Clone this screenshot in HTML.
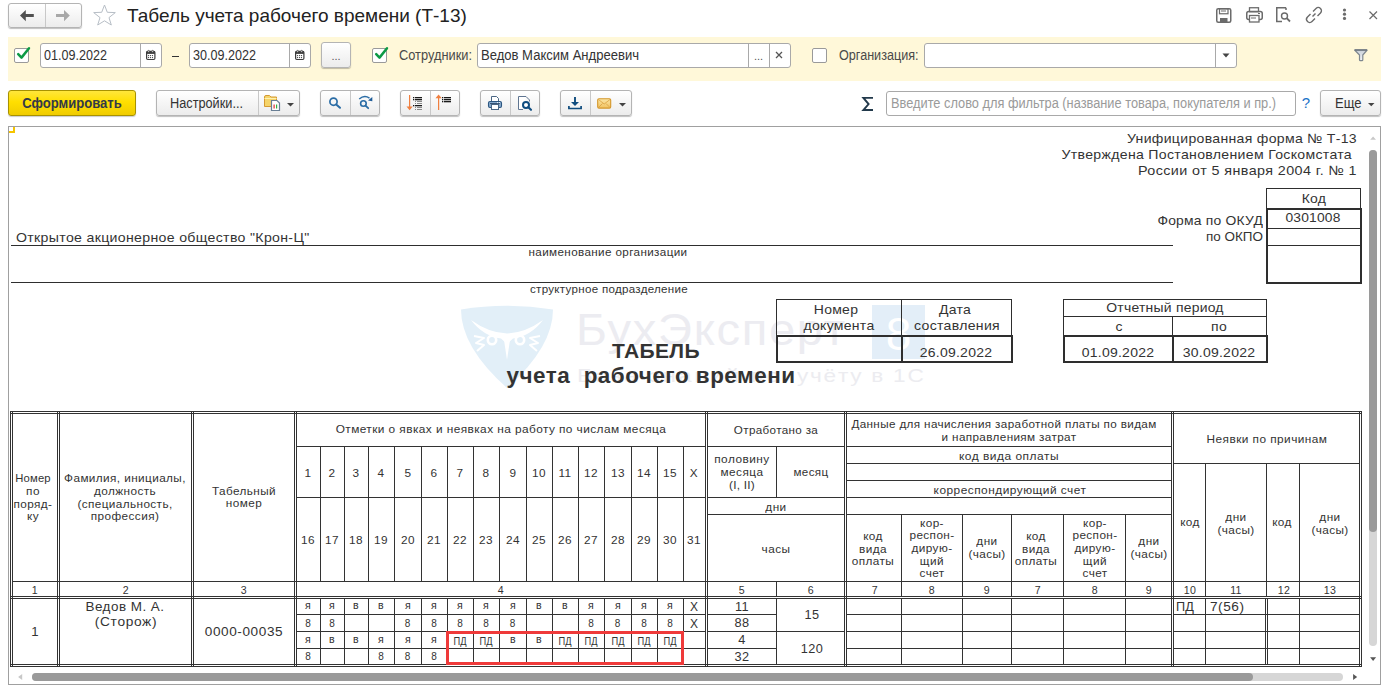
<!DOCTYPE html>
<html><head><meta charset="utf-8">
<style>
html,body{margin:0;padding:0;background:#fff;width:1387px;height:692px;overflow:hidden;position:relative;font-family:"Liberation Sans",sans-serif;}
body>div{position:absolute;}
svg{position:absolute;overflow:visible;}
</style></head><body>
<div style="left:8px;top:3px;width:72px;height:23px;border:1px solid #b4b4b4;border-radius:3px;background:linear-gradient(#fff,#ececec);box-shadow:0 1px 1px rgba(0,0,0,0.25);"></div>
<div style="left:45px;top:4px;width:1px;height:23px;background:#c8c8c8;"></div>
<svg style="left:20px;top:10px" width="14" height="12" viewBox="0 0 14 12"><path d="M0 5.6 L5.8 -0.1 V4.1 H13.8 V7.1 H5.8 V11.2 Z" fill="#505050"/></svg>
<svg style="left:56px;top:10px" width="14" height="12" viewBox="0 0 14 12"><path d="M13.8 5.6 L8 -0.1 V4.1 H0 V7.1 H8 V11.2 Z" fill="#a8a8a8"/></svg>
<svg style="left:93px;top:4px" width="24" height="22" viewBox="0 0 24 22"><path d="M11.5 1 L14.3 8.3 L22.3 8.6 L16 13.6 L18.3 21 L11.5 16.8 L4.7 21 L7 13.6 L0.7 8.6 L8.7 8.3 Z" fill="none" stroke="#b7bec6" stroke-width="1"/></svg>
<div style="top:6.42px;font-size:19px;line-height:19px;color:#222;white-space:pre;left:127px;">Табель учета рабочего времени (Т-13)</div>
<svg style="left:1216px;top:8px" width="16" height="15" viewBox="0 0 16 15"><rect x="0.75" y="0.75" width="14" height="13.5" rx="1.5" fill="none" stroke="#6b6b6b" stroke-width="1.5"/><rect x="3.5" y="0.75" width="8.5" height="5" fill="none" stroke="#6b6b6b" stroke-width="1.2"/><line x1="5" y1="3" x2="10" y2="3" stroke="#6b6b6b"/><rect x="4" y="10" width="7.5" height="4.5" fill="#6b6b6b"/></svg>
<svg style="left:1246px;top:7px" width="17" height="16" viewBox="0 0 17 16"><rect x="3.5" y="0.75" width="9" height="4" fill="none" stroke="#6b6b6b" stroke-width="1.3"/><rect x="0.75" y="4.5" width="15.5" height="8" rx="2" fill="none" stroke="#6b6b6b" stroke-width="1.5"/><rect x="3.5" y="8.5" width="9.5" height="6.5" fill="#fff" stroke="#6b6b6b" stroke-width="1.3"/><line x1="5" y1="11" x2="10" y2="11" stroke="#6b6b6b"/><line x1="12" y1="6.5" x2="14" y2="6.5" stroke="#6b6b6b"/></svg>
<svg style="left:1276px;top:7px" width="16" height="16" viewBox="0 0 16 16"><path d="M10 0.75 H0.75 V14.5 H6" fill="none" stroke="#6b6b6b" stroke-width="1.5"/><path d="M10 0.75 V3" fill="none" stroke="#6b6b6b" stroke-width="1.5"/><circle cx="8.5" cy="9" r="3" fill="none" stroke="#6b6b6b" stroke-width="1.4"/><line x1="10.7" y1="11.2" x2="14" y2="14.5" stroke="#6b6b6b" stroke-width="1.8"/></svg>
<svg style="left:1306px;top:7px" width="16" height="16" viewBox="0 0 16 16"><path d="M6.5 9.5 L9.5 6.5" stroke="#6b6b6b" stroke-width="1.4"/><path d="M7 4.5 L10 1.5 A2.8 2.8 0 0 1 14.5 6 L11.5 9" fill="none" stroke="#6b6b6b" stroke-width="1.4"/><path d="M9 11.5 L6 14.5 A2.8 2.8 0 0 1 1.5 10 L4.5 7" fill="none" stroke="#6b6b6b" stroke-width="1.4"/></svg>
<svg style="left:1342px;top:8px" width="5" height="13" viewBox="0 0 5 13"><circle cx="2.5" cy="2" r="1.6" fill="#6b6b6b"/><circle cx="2.5" cy="6.2" r="1.6" fill="#6b6b6b"/><circle cx="2.5" cy="10.4" r="1.6" fill="#6b6b6b"/></svg>
<svg style="left:1369px;top:11px" width="9" height="9" viewBox="0 0 9 9"><path d="M0.5 0.5 L8 8 M8 0.5 L0.5 8" stroke="#6b6b6b" stroke-width="1.2"/></svg>
<div style="left:8px;top:37px;width:1373px;height:44px;background:#fff8d9;"></div>
<div style="left:14px;top:48px;width:13px;height:13px;border:1px solid #9a9a9a;border-radius:2px;background:#fff"></div>
<svg style="left:14px;top:45px" width="18" height="18" viewBox="0 0 18 18"><path d="M4.2 9.2 L7.5 12.6 L15 3.2" fill="none" stroke="#0c9a45" stroke-width="2.5" stroke-linecap="round" stroke-linejoin="round"/></svg>
<div style="left:40px;top:43px;width:120px;height:23px;border:1px solid #a9a9a9;border-radius:3px;background:#fff;"></div>
<div style="left:140px;top:44px;width:1px;height:23px;background:#a9a9a9;"></div>
<div style="top:48.15px;font-size:14px;line-height:14px;color:#333;white-space:pre;left:44px;transform:scaleX(0.899);transform-origin:left 0;">01.09.2022</div>
<svg style="left:146px;top:50px" width="10" height="10" viewBox="0 0 10 10"><rect x="0.6" y="1.3" width="8.3" height="8.2" rx="1.2" fill="#fff" stroke="#3d3d3d" stroke-width="1.2"/><rect x="0.6" y="1.3" width="8.3" height="2.6" fill="#3d3d3d"/><circle cx="2.6" cy="1.3" r="0.9" fill="#fff" stroke="#3d3d3d" stroke-width="0.7"/><circle cx="6.6" cy="1.3" r="0.9" fill="#fff" stroke="#3d3d3d" stroke-width="0.7"/><g fill="#3d3d3d"><circle cx="2.5" cy="5.6" r="0.65"/><circle cx="4.5" cy="5.6" r="0.65"/><circle cx="6.5" cy="5.6" r="0.65"/><circle cx="2.5" cy="7.6" r="0.65"/><circle cx="4.5" cy="7.6" r="0.65"/><circle cx="6.5" cy="7.6" r="0.65"/></g></svg>
<div style="left:172px;top:56px;width:7px;height:1px;background:#333;"></div>
<div style="left:189px;top:43px;width:120px;height:23px;border:1px solid #a9a9a9;border-radius:3px;background:#fff;"></div>
<div style="left:289px;top:44px;width:1px;height:23px;background:#a9a9a9;"></div>
<div style="top:48.15px;font-size:14px;line-height:14px;color:#333;white-space:pre;left:193px;transform:scaleX(0.899);transform-origin:left 0;">30.09.2022</div>
<svg style="left:295px;top:50px" width="10" height="10" viewBox="0 0 10 10"><rect x="0.6" y="1.3" width="8.3" height="8.2" rx="1.2" fill="#fff" stroke="#3d3d3d" stroke-width="1.2"/><rect x="0.6" y="1.3" width="8.3" height="2.6" fill="#3d3d3d"/><circle cx="2.6" cy="1.3" r="0.9" fill="#fff" stroke="#3d3d3d" stroke-width="0.7"/><circle cx="6.6" cy="1.3" r="0.9" fill="#fff" stroke="#3d3d3d" stroke-width="0.7"/><g fill="#3d3d3d"><circle cx="2.5" cy="5.6" r="0.65"/><circle cx="4.5" cy="5.6" r="0.65"/><circle cx="6.5" cy="5.6" r="0.65"/><circle cx="2.5" cy="7.6" r="0.65"/><circle cx="4.5" cy="7.6" r="0.65"/><circle cx="6.5" cy="7.6" r="0.65"/></g></svg>
<div style="left:321px;top:42px;width:28px;height:24px;border:1px solid #b4b4b4;border-radius:3px;background:linear-gradient(#fff,#ececec);box-shadow:0 1px 1px rgba(0,0,0,0.25);"></div>
<div style="top:50.69px;font-size:11px;line-height:11px;color:#555;white-space:pre;left:-64.00px;width:800px;text-align:center;">...</div>
<div style="left:372px;top:48px;width:13px;height:13px;border:1px solid #9a9a9a;border-radius:2px;background:#fff"></div>
<svg style="left:372px;top:45px" width="18" height="18" viewBox="0 0 18 18"><path d="M4.2 9.2 L7.5 12.6 L15 3.2" fill="none" stroke="#0c9a45" stroke-width="2.5" stroke-linecap="round" stroke-linejoin="round"/></svg>
<div style="top:48.15px;font-size:14px;line-height:14px;color:#4a4a4a;white-space:pre;left:399px;transform:scaleX(0.9155);transform-origin:left 0;">Сотрудники:</div>
<div style="left:477px;top:43px;width:312px;height:23px;border:1px solid #a9a9a9;border-radius:3px;background:#fff;"></div>
<div style="left:748px;top:44px;width:1px;height:23px;background:#a9a9a9;"></div>
<div style="left:769px;top:44px;width:1px;height:23px;background:#a9a9a9;"></div>
<div style="top:48.15px;font-size:14px;line-height:14px;color:#333;white-space:pre;left:481px;transform:scaleX(0.9322);transform-origin:left 0;">Ведов Максим Андреевич</div>
<div style="top:50.69px;font-size:11px;line-height:11px;color:#555;white-space:pre;left:358.50px;width:800px;text-align:center;">...</div>
<svg style="left:775px;top:51px" width="8" height="8" viewBox="0 0 8 8"><path d="M1 1 L7 7 M7 1 L1 7" stroke="#555" stroke-width="1.3"/></svg>
<div style="left:812px;top:48px;width:13px;height:13px;border:1px solid #9a9a9a;border-radius:2px;background:#fff"></div>
<div style="top:48.15px;font-size:14px;line-height:14px;color:#4a4a4a;white-space:pre;left:839px;transform:scaleX(0.9001);transform-origin:left 0;">Организация:</div>
<div style="left:924px;top:43px;width:311px;height:23px;border:1px solid #a9a9a9;border-radius:3px;background:#fff;"></div>
<div style="left:1215px;top:44px;width:1px;height:23px;background:#a9a9a9;"></div>
<svg style="left:1222px;top:53px" width="8" height="5" viewBox="0 0 8 5"><path d="M0.5 0.5 H7.5 L4 4.5 Z" fill="#444"/></svg>
<svg style="left:1353px;top:48px" width="16" height="14" viewBox="0 0 16 14"><defs><linearGradient id="fun" x1="0" y1="0" x2="0" y2="1"><stop offset="0" stop-color="#c9d0d8"/><stop offset="1" stop-color="#f2f4f7"/></linearGradient></defs><path d="M1.6 2 H14.2 L9.8 7 V11.8 Q9.8 12.7 8.9 12.7 H7.4 Q6.5 12.7 6.5 11.8 V7 Z" fill="url(#fun)" stroke="#7f8890" stroke-width="1.2" stroke-linejoin="round"/><line x1="1.8" y1="2" x2="14" y2="2" stroke="#6f7880" stroke-width="1.6"/></svg>
<div style="left:8px;top:90px;width:126px;height:24px;border:1px solid #a89200;border-radius:3px;background:linear-gradient(#ffe63c,#ffdf00 45%,#f0cc00);box-shadow:0 1px 1px rgba(0,0,0,0.2)"></div>
<div style="top:96.15px;font-size:14px;line-height:14px;color:#333a48;white-space:pre;font-weight:bold;left:-328.50px;width:800px;text-align:center;transform:scaleX(0.9329);transform-origin:center 0;">Сформировать</div>
<div style="left:156px;top:90px;width:142px;height:24px;border:1px solid #b4b4b4;border-radius:3px;background:linear-gradient(#fff,#ececec);box-shadow:0 1px 1px rgba(0,0,0,0.25);"></div>
<div style="left:258px;top:91px;width:1px;height:24px;background:#c8c8c8;"></div>
<div style="top:96.15px;font-size:14px;line-height:14px;color:#333;white-space:pre;left:170px;transform:scaleX(0.9088);transform-origin:left 0;">Настройки...</div>
<svg style="left:263px;top:94px" width="20" height="18" viewBox="0 0 20 18"><path d="M1.5 3 Q1.5 1.5 3 1.5 H6.5 L8 3 H13.5 V12.5 H1.5 Z" fill="#f5d46a" stroke="#d59a32" stroke-width="1"/><path d="M1.5 4.5 H13.5" stroke="#fff1b0" stroke-width="1"/><path d="M8.5 6.5 H14 L16.5 9 V16.5 H8.5 Z" fill="#fff" stroke="#6a7f95" stroke-width="1.2"/><rect x="10.5" y="10.5" width="1.2" height="4" fill="#e03030"/><rect x="13" y="10.5" width="1.2" height="4" fill="#30b040"/></svg>
<svg style="left:287px;top:103px" width="7" height="4" viewBox="0 0 7 4"><path d="M0 0 H7 L3.5 3.5 Z" fill="#444"/></svg>
<div style="left:320px;top:90px;width:58px;height:24px;border:1px solid #b4b4b4;border-radius:3px;background:linear-gradient(#fff,#ececec);box-shadow:0 1px 1px rgba(0,0,0,0.25);"></div>
<div style="left:350px;top:91px;width:1px;height:24px;background:#c8c8c8;"></div>
<svg style="left:327px;top:95px" width="16" height="16" viewBox="0 0 16 16"><circle cx="6.5" cy="6.7" r="3.6" fill="none" stroke="#2a6ca5" stroke-width="1.7"/><line x1="9.2" y1="9.4" x2="13" y2="12.8" stroke="#2a6ca5" stroke-width="2" stroke-linecap="round"/></svg>
<svg style="left:356px;top:94px" width="18" height="17" viewBox="0 0 18 17"><circle cx="7.4" cy="9.5" r="2.8" fill="none" stroke="#2a6ca5" stroke-width="1.6"/><line x1="9.5" y1="11.6" x2="12.2" y2="14.2" stroke="#2a6ca5" stroke-width="1.8" stroke-linecap="round"/><path d="M3.2 5 Q8.4 0.6 13.5 4.2" fill="none" stroke="#2a6ca5" stroke-width="1.5"/><path d="M12 6.6 L16.3 3 L16.3 7.2 Z" fill="#1e5c98"/></svg>
<div style="left:400px;top:90px;width:58px;height:24px;border:1px solid #b4b4b4;border-radius:3px;background:linear-gradient(#fff,#ececec);box-shadow:0 1px 1px rgba(0,0,0,0.25);"></div>
<div style="left:430px;top:91px;width:1px;height:24px;background:#c8c8c8;"></div>
<svg style="left:402px;top:92px" width="56" height="22" viewBox="0 0 56 22"><rect x="7" y="3" width="1.2" height="13" fill="#f07f3f"/><path d="M4.5 14.5 H10.7 L7.6 18.3 Z" fill="#f07f3f"/><g fill="#1a1a1a"><rect x="11" y="5" width="1.3" height="1.3"/><rect x="13" y="5" width="7" height="1.3"/><rect x="11" y="7" width="1.3" height="1.3"/><rect x="13" y="7" width="7" height="1.3"/><rect x="11" y="13" width="1.3" height="1.3"/><rect x="13" y="13" width="7" height="1.3"/></g><g fill="#8a8a8a"><rect x="13" y="9" width="1" height="1"/><rect x="15" y="9" width="5" height="1"/><rect x="13" y="11" width="1" height="1"/><rect x="15" y="11" width="5" height="1"/><rect x="13" y="15" width="1" height="1"/><rect x="15" y="15" width="5" height="1"/><rect x="13" y="17" width="1" height="1"/><rect x="15" y="17" width="5" height="1"/></g><rect x="36" y="5" width="1.2" height="13" fill="#f07f3f"/><path d="M33.5 6.3 H39.7 L36.6 2.5 Z" fill="#f07f3f"/><g fill="#1a1a1a"><rect x="40" y="5" width="1.3" height="1.3"/><rect x="42" y="5" width="7" height="1.3"/><rect x="40" y="7" width="1.3" height="1.3"/><rect x="42" y="7" width="7" height="1.3"/><rect x="40" y="9" width="1.3" height="1.3"/><rect x="42" y="9" width="7" height="1.3"/></g></svg>
<div style="left:480px;top:90px;width:58px;height:24px;border:1px solid #b4b4b4;border-radius:3px;background:linear-gradient(#fff,#ececec);box-shadow:0 1px 1px rgba(0,0,0,0.25);"></div>
<div style="left:510px;top:91px;width:1px;height:24px;background:#c8c8c8;"></div>
<svg style="left:482px;top:92px" width="56" height="22" viewBox="0 0 56 22"><path d="M9.5 4.5 H14.5 L16.5 6.5 V10 H9.5 Z" fill="#fff" stroke="#4a6684" stroke-width="1"/><rect x="6.5" y="9.5" width="13" height="6" rx="1.5" fill="#86a9cc" stroke="#2c5680" stroke-width="1.1"/><line x1="8" y1="11.5" x2="18" y2="11.5" stroke="#2c4a6a" stroke-width="0.9"/><rect x="15" y="10.2" width="1" height="0.9" fill="#fff"/><rect x="17" y="10.2" width="1" height="0.9" fill="#fff"/><rect x="9.5" y="12.5" width="7" height="5" fill="#fff" stroke="#4a6684" stroke-width="1"/><path d="M44 4.5 H36.5 V17.5 H41" fill="#fff" stroke="#5f7591" stroke-width="1"/><path d="M44 4.5 L47.5 8 V9.5" fill="none" stroke="#5f7591" stroke-width="1"/><circle cx="44" cy="12.9" r="3" fill="#fff" stroke="#0f4d80" stroke-width="2"/><line x1="46.3" y1="15.2" x2="49" y2="17.8" stroke="#0f4d80" stroke-width="2.1" stroke-linecap="round"/></svg>
<div style="left:560px;top:90px;width:70px;height:24px;border:1px solid #b4b4b4;border-radius:3px;background:linear-gradient(#fff,#ececec);box-shadow:0 1px 1px rgba(0,0,0,0.25);"></div>
<div style="left:590px;top:91px;width:1px;height:24px;background:#c8c8c8;"></div>
<svg style="left:567px;top:96px" width="16" height="14" viewBox="0 0 16 14"><line x1="8" y1="1" x2="8" y2="7.5" stroke="#0f4c7e" stroke-width="1.9"/><path d="M4 6 H12 L8 10 Z" fill="#0f4c7e"/><path d="M1.9 10 V12.5 H14.1 V10" fill="none" stroke="#0f4c7e" stroke-width="1.7"/></svg>
<svg style="left:597px;top:98px" width="15" height="11" viewBox="0 0 15 11"><defs><linearGradient id="env" x1="0" y1="0" x2="0" y2="1"><stop offset="0" stop-color="#fbe6a6"/><stop offset="1" stop-color="#f1c261"/></linearGradient></defs><rect x="0.7" y="0.7" width="13" height="9.4" rx="1.3" fill="url(#env)" stroke="#d4962a" stroke-width="1.1"/><path d="M1.5 1.5 L7.2 6 L13 1.5 M1.5 9.5 L5.5 5.5 M13 9.5 L9 5.5" fill="none" stroke="#d9a040" stroke-width="0.8"/></svg>
<svg style="left:619px;top:103px" width="7" height="4" viewBox="0 0 7 4"><path d="M0 0 H7 L3.5 3.5 Z" fill="#444"/></svg>
<svg style="left:861px;top:96px" width="14" height="16" viewBox="0 0 14 16"><path d="M12 1.9 H2.4 L7.6 8.1 L2.4 14 H12" fill="none" stroke="#22394b" stroke-width="1.9" stroke-linejoin="miter"/></svg>
<div style="left:886px;top:91px;width:408px;height:23px;border:1px solid #a9a9a9;border-radius:3px;background:#fff;"></div>
<div style="top:96.15px;font-size:14px;line-height:14px;color:#9a9a9a;white-space:pre;left:890.5px;transform:scaleX(0.914);transform-origin:left 0;">Введите слово для фильтра (название товара, покупателя и пр.)</div>
<div style="top:95.30px;font-size:15px;line-height:15px;color:#1a73c8;white-space:pre;left:906.00px;width:800px;text-align:center;">?</div>
<div style="left:1320px;top:90px;width:59px;height:24px;border:1px solid #b4b4b4;border-radius:3px;background:linear-gradient(#fff,#ececec);box-shadow:0 1px 1px rgba(0,0,0,0.25);"></div>
<div style="top:96.15px;font-size:14px;line-height:14px;color:#333;white-space:pre;left:1334.8px;transform:scaleX(0.9298);transform-origin:left 0;">Еще</div>
<svg style="left:1367.5px;top:103px" width="7" height="4" viewBox="0 0 7 4"><path d="M0 0 H6.5 L3.25 3.3 Z" fill="#444"/></svg>
<div style="left:8px;top:126px;width:1371px;height:557px;border:1px solid #a0a0a0"></div>
<div style="left:9px;top:131px;width:6px;height:2px;background:#f5c400;"></div>
<div style="left:13px;top:127px;width:2px;height:6px;background:#f5c400;"></div>
<svg style="left:459px;top:303px" width="98" height="88" viewBox="0 0 98 88"><path d="M2 6.5 Q48 -1 94 6.5 Q94 44 48 85 Q2 44 2 6.5 Z" fill="#e2eff8"/><g fill="#fff"><path d="M12 17 Q30 30 48 30.5 Q66 30 84 17 Q72 33 54 35.5 L48 41 L42 35.5 Q24 33 12 17 Z"/><path d="M45 37 L48 57 L51 37 Z"/></g><g fill="none" stroke="#fff" stroke-width="2.6"><circle cx="33" cy="37" r="4.2"/><circle cx="61" cy="37" r="4.2"/><path d="M15 33 L25 35 L17 40 L25 42 L18 48" stroke-width="2" stroke-linejoin="round"/><path d="M81 33 L71 35 L79 40 L71 42 L78 48" stroke-width="2" stroke-linejoin="round"/></g></svg>
<div style="top:308.25px;font-size:44px;line-height:44px;color:#ececf1;white-space:pre;letter-spacing:1.576px;left:576px;transform:scaleX(1.0712);transform-origin:left 0;">БухЭксперт</div>
<div style="left:872px;top:305px;width:53px;height:54px;background:#e3eef8;"></div>
<div style="top:311.06px;font-size:46px;line-height:46px;color:#ffffff;white-space:pre;left:498.50px;width:800px;text-align:center;">8</div>
<div style="top:365.92px;font-size:19px;line-height:19px;color:#ececf0;white-space:pre;letter-spacing:1.985px;left:577px;transform:scaleX(1.2592);transform-origin:left 0;">База знаний по</div>
<div style="top:365.92px;font-size:19px;line-height:19px;color:#ececf0;white-space:pre;letter-spacing:1.48px;left:797px;transform:scaleX(1.1884);transform-origin:left 0;">учёту в 1С</div>
<div style="top:131.57px;font-size:13.5px;line-height:13.5px;color:#333;white-space:pre;letter-spacing:0.299px;left:556.80px;width:800px;text-align:right;transform:scaleX(1.041);transform-origin:right 0;">Унифицированная форма № Т-13</div>
<div style="top:147.57px;font-size:13.5px;line-height:13.5px;color:#333;white-space:pre;letter-spacing:0.301px;left:551.80px;width:800px;text-align:right;transform:scaleX(1.0436);transform-origin:right 0;">Утверждена Постановлением Госкомстата</div>
<div style="top:163.57px;font-size:13.5px;line-height:13.5px;color:#333;white-space:pre;letter-spacing:0.382px;left:556.88px;width:800px;text-align:right;transform:scaleX(1.0625);transform-origin:right 0;">России от 5 января 2004 г. № 1</div>
<div style="left:1266px;top:188px;width:1px;height:21px;background:#2e2e2e;"></div>
<div style="left:1360px;top:188px;width:1px;height:21px;background:#2e2e2e;"></div>
<div style="left:1266px;top:188px;width:95px;height:1px;background:#2e2e2e;"></div>
<div style="left:1266px;top:208px;width:96px;height:2px;background:#2e2e2e;"></div>
<div style="left:1266px;top:208px;width:2px;height:76px;background:#2e2e2e;"></div>
<div style="left:1360px;top:208px;width:2px;height:76px;background:#2e2e2e;"></div>
<div style="left:1266px;top:282px;width:96px;height:2px;background:#2e2e2e;"></div>
<div style="left:1268px;top:228px;width:92px;height:1px;background:#2e2e2e;"></div>
<div style="left:1268px;top:245px;width:92px;height:1px;background:#2e2e2e;"></div>
<div style="top:191.57px;font-size:13.5px;line-height:13.5px;color:#333;white-space:pre;letter-spacing:0.259px;left:913.63px;width:800px;text-align:center;transform:scaleX(1.035);transform-origin:center 0;">Код</div>
<div style="top:211.07px;font-size:13.5px;line-height:13.5px;color:#333;white-space:pre;letter-spacing:0.17px;left:913.09px;width:800px;text-align:center;transform:scaleX(1.0232);transform-origin:center 0;">0301008</div>
<div style="top:213.57px;font-size:13.5px;line-height:13.5px;color:#333;white-space:pre;letter-spacing:0.208px;left:462.71px;width:800px;text-align:right;transform:scaleX(1.0278);transform-origin:right 0;">Форма по ОКУД</div>
<div style="top:230.37px;font-size:13.5px;line-height:13.5px;color:#333;white-space:pre;left:462.50px;width:800px;text-align:right;transform:scaleX(0.9975);transform-origin:right 0;">по ОКПО</div>
<div style="top:231.07px;font-size:13.5px;line-height:13.5px;color:#333;white-space:pre;letter-spacing:0.311px;left:15.5px;transform:scaleX(1.0459);transform-origin:left 0;">Открытое акционерное общество &quot;Крон-Ц&quot;</div>
<div style="left:11px;top:245px;width:1162px;height:1px;background:#2e2e2e;"></div>
<div style="top:246.99px;font-size:11px;line-height:11px;color:#333;white-space:pre;letter-spacing:0.342px;left:208.17px;width:800px;text-align:center;transform:scaleX(1.0617);transform-origin:center 0;">наименование организации</div>
<div style="left:11px;top:282px;width:1162px;height:1px;background:#2e2e2e;"></div>
<div style="top:283.79px;font-size:11px;line-height:11px;color:#333;white-space:pre;letter-spacing:0.281px;left:208.64px;width:800px;text-align:center;transform:scaleX(1.0517);transform-origin:center 0;">структурное подразделение</div>
<div style="left:776px;top:299px;width:236px;height:1px;background:#2e2e2e;"></div>
<div style="left:776px;top:299px;width:1px;height:37px;background:#2e2e2e;"></div>
<div style="left:1011px;top:299px;width:1px;height:37px;background:#2e2e2e;"></div>
<div style="left:901px;top:299px;width:1px;height:37px;background:#2e2e2e;"></div>
<div style="left:776px;top:335px;width:237px;height:2px;background:#2e2e2e;"></div>
<div style="left:776px;top:335px;width:2px;height:28px;background:#2e2e2e;"></div>
<div style="left:1011px;top:335px;width:2px;height:28px;background:#2e2e2e;"></div>
<div style="left:776px;top:361px;width:237px;height:2px;background:#2e2e2e;"></div>
<div style="left:901px;top:335px;width:2px;height:28px;background:#2e2e2e;"></div>
<div style="top:302.57px;font-size:13.5px;line-height:13.5px;color:#333;white-space:pre;letter-spacing:0.281px;left:436.14px;width:800px;text-align:center;transform:scaleX(1.035);transform-origin:center 0;">Номер</div>
<div style="top:319.17px;font-size:13.5px;line-height:13.5px;color:#333;white-space:pre;letter-spacing:0.276px;left:438.74px;width:800px;text-align:center;transform:scaleX(1.0393);transform-origin:center 0;">документа</div>
<div style="top:302.57px;font-size:13.5px;line-height:13.5px;color:#333;white-space:pre;letter-spacing:0.253px;left:555.13px;width:800px;text-align:center;transform:scaleX(1.035);transform-origin:center 0;">Дата</div>
<div style="top:319.17px;font-size:13.5px;line-height:13.5px;color:#333;white-space:pre;letter-spacing:0.294px;left:556.75px;width:800px;text-align:center;transform:scaleX(1.0425);transform-origin:center 0;">составления</div>
<div style="top:346.17px;font-size:13.5px;line-height:13.5px;color:#333;white-space:pre;letter-spacing:0.233px;left:555.92px;width:800px;text-align:center;transform:scaleX(1.0357);transform-origin:center 0;">26.09.2022</div>
<div style="left:1063px;top:299px;width:204px;height:1px;background:#2e2e2e;"></div>
<div style="left:1063px;top:299px;width:1px;height:37px;background:#2e2e2e;"></div>
<div style="left:1266px;top:299px;width:1px;height:37px;background:#2e2e2e;"></div>
<div style="left:1063px;top:316px;width:204px;height:1px;background:#2e2e2e;"></div>
<div style="left:1172px;top:316px;width:1px;height:20px;background:#2e2e2e;"></div>
<div style="left:1063px;top:335px;width:205px;height:2px;background:#2e2e2e;"></div>
<div style="left:1063px;top:335px;width:2px;height:28px;background:#2e2e2e;"></div>
<div style="left:1266px;top:335px;width:2px;height:28px;background:#2e2e2e;"></div>
<div style="left:1063px;top:361px;width:205px;height:2px;background:#2e2e2e;"></div>
<div style="left:1172px;top:335px;width:2px;height:28px;background:#2e2e2e;"></div>
<div style="top:301.27px;font-size:13.5px;line-height:13.5px;color:#333;white-space:pre;letter-spacing:0.23px;left:765.41px;width:800px;text-align:center;transform:scaleX(1.0323);transform-origin:center 0;">Отчетный период</div>
<div style="top:319.57px;font-size:13.5px;line-height:13.5px;color:#333;white-space:pre;letter-spacing:0.228px;left:718.51px;width:800px;text-align:center;transform:scaleX(1.035);transform-origin:center 0;">с</div>
<div style="top:319.57px;font-size:13.5px;line-height:13.5px;color:#333;white-space:pre;letter-spacing:0.251px;left:818.93px;width:800px;text-align:center;transform:scaleX(1.035);transform-origin:center 0;">по</div>
<div style="top:345.97px;font-size:13.5px;line-height:13.5px;color:#333;white-space:pre;letter-spacing:0.233px;left:717.92px;width:800px;text-align:center;transform:scaleX(1.0357);transform-origin:center 0;">01.09.2022</div>
<div style="top:345.97px;font-size:13.5px;line-height:13.5px;color:#333;white-space:pre;letter-spacing:0.233px;left:818.92px;width:800px;text-align:center;transform:scaleX(1.0357);transform-origin:center 0;">30.09.2022</div>
<div style="top:340.85px;font-size:20.5px;line-height:20.5px;color:#333;white-space:pre;font-weight:bold;letter-spacing:0.36px;left:256.18px;width:800px;text-align:center;transform:scaleX(1.0266);transform-origin:center 0;">ТАБЕЛЬ</div>
<div style="top:365.50px;font-size:21.5px;line-height:21.5px;color:#333;white-space:pre;font-weight:bold;letter-spacing:0.483px;left:250.84px;width:800px;text-align:center;transform:scaleX(1.0436);transform-origin:center 0;">учета  рабочего времени</div>
<div style="left:10px;top:411px;width:1px;height:256px;background:#333;"></div>
<div style="left:12px;top:411px;width:1px;height:256px;background:#333;"></div>
<div style="left:57px;top:411px;width:1px;height:256px;background:#333;"></div>
<div style="left:59px;top:411px;width:1px;height:256px;background:#333;"></div>
<div style="left:191px;top:411px;width:1px;height:256px;background:#333;"></div>
<div style="left:193px;top:411px;width:1px;height:256px;background:#333;"></div>
<div style="left:294px;top:411px;width:1px;height:256px;background:#333;"></div>
<div style="left:296px;top:411px;width:1px;height:256px;background:#333;"></div>
<div style="left:705px;top:411px;width:1px;height:256px;background:#333;"></div>
<div style="left:707px;top:411px;width:1px;height:256px;background:#333;"></div>
<div style="left:844px;top:411px;width:1px;height:256px;background:#333;"></div>
<div style="left:846px;top:411px;width:1px;height:256px;background:#333;"></div>
<div style="left:1171px;top:411px;width:1px;height:256px;background:#333;"></div>
<div style="left:1173px;top:411px;width:1px;height:256px;background:#333;"></div>
<div style="left:1359px;top:411px;width:1px;height:256px;background:#333;"></div>
<div style="left:1361px;top:411px;width:1px;height:256px;background:#333;"></div>
<div style="left:10px;top:411px;width:1352px;height:1px;background:#333;"></div>
<div style="left:10px;top:413px;width:1352px;height:1px;background:#333;"></div>
<div style="left:10px;top:596px;width:1352px;height:1px;background:#333;"></div>
<div style="left:10px;top:598px;width:1352px;height:1px;background:#333;"></div>
<div style="left:10px;top:664px;width:1352px;height:1px;background:#333;"></div>
<div style="left:10px;top:666px;width:1352px;height:1px;background:#333;"></div>
<div style="left:12px;top:581px;width:1348px;height:1px;background:#333;"></div>
<div style="left:320px;top:446px;width:1px;height:135px;background:#333;"></div>
<div style="left:320px;top:598px;width:1px;height:66px;background:#333;"></div>
<div style="left:344px;top:446px;width:1px;height:135px;background:#333;"></div>
<div style="left:344px;top:598px;width:1px;height:66px;background:#333;"></div>
<div style="left:368px;top:446px;width:1px;height:135px;background:#333;"></div>
<div style="left:368px;top:598px;width:1px;height:66px;background:#333;"></div>
<div style="left:394px;top:446px;width:1px;height:135px;background:#333;"></div>
<div style="left:394px;top:598px;width:1px;height:66px;background:#333;"></div>
<div style="left:421px;top:446px;width:1px;height:135px;background:#333;"></div>
<div style="left:421px;top:598px;width:1px;height:66px;background:#333;"></div>
<div style="left:447px;top:446px;width:1px;height:135px;background:#333;"></div>
<div style="left:447px;top:598px;width:1px;height:66px;background:#333;"></div>
<div style="left:473px;top:446px;width:1px;height:135px;background:#333;"></div>
<div style="left:473px;top:598px;width:1px;height:66px;background:#333;"></div>
<div style="left:499px;top:446px;width:1px;height:135px;background:#333;"></div>
<div style="left:499px;top:598px;width:1px;height:66px;background:#333;"></div>
<div style="left:526px;top:446px;width:1px;height:135px;background:#333;"></div>
<div style="left:526px;top:598px;width:1px;height:66px;background:#333;"></div>
<div style="left:552px;top:446px;width:1px;height:135px;background:#333;"></div>
<div style="left:552px;top:598px;width:1px;height:66px;background:#333;"></div>
<div style="left:578px;top:446px;width:1px;height:135px;background:#333;"></div>
<div style="left:578px;top:598px;width:1px;height:66px;background:#333;"></div>
<div style="left:604px;top:446px;width:1px;height:135px;background:#333;"></div>
<div style="left:604px;top:598px;width:1px;height:66px;background:#333;"></div>
<div style="left:631px;top:446px;width:1px;height:135px;background:#333;"></div>
<div style="left:631px;top:598px;width:1px;height:66px;background:#333;"></div>
<div style="left:657px;top:446px;width:1px;height:135px;background:#333;"></div>
<div style="left:657px;top:598px;width:1px;height:66px;background:#333;"></div>
<div style="left:683px;top:446px;width:1px;height:135px;background:#333;"></div>
<div style="left:683px;top:598px;width:1px;height:66px;background:#333;"></div>
<div style="left:296px;top:446px;width:409px;height:1px;background:#333;"></div>
<div style="left:296px;top:497px;width:409px;height:1px;background:#333;"></div>
<div style="left:707px;top:446px;width:137px;height:1px;background:#333;"></div>
<div style="left:707px;top:497px;width:137px;height:1px;background:#333;"></div>
<div style="left:707px;top:514px;width:137px;height:1px;background:#333;"></div>
<div style="left:776px;top:446px;width:1px;height:51px;background:#333;"></div>
<div style="left:776px;top:581px;width:1px;height:15px;background:#333;"></div>
<div style="left:776px;top:598px;width:1px;height:66px;background:#333;"></div>
<div style="left:846px;top:446px;width:325px;height:1px;background:#333;"></div>
<div style="left:846px;top:463px;width:325px;height:1px;background:#333;"></div>
<div style="left:846px;top:480px;width:325px;height:1px;background:#333;"></div>
<div style="left:846px;top:497px;width:325px;height:1px;background:#333;"></div>
<div style="left:846px;top:514px;width:325px;height:1px;background:#333;"></div>
<div style="left:901px;top:514px;width:1px;height:82px;background:#333;"></div>
<div style="left:901px;top:598px;width:1px;height:66px;background:#333;"></div>
<div style="left:962px;top:514px;width:1px;height:82px;background:#333;"></div>
<div style="left:962px;top:598px;width:1px;height:66px;background:#333;"></div>
<div style="left:1011px;top:514px;width:1px;height:82px;background:#333;"></div>
<div style="left:1011px;top:598px;width:1px;height:66px;background:#333;"></div>
<div style="left:1063px;top:514px;width:1px;height:82px;background:#333;"></div>
<div style="left:1063px;top:598px;width:1px;height:66px;background:#333;"></div>
<div style="left:1125px;top:514px;width:1px;height:82px;background:#333;"></div>
<div style="left:1125px;top:598px;width:1px;height:66px;background:#333;"></div>
<div style="left:1173px;top:463px;width:186px;height:1px;background:#333;"></div>
<div style="left:1205px;top:463px;width:1px;height:133px;background:#333;"></div>
<div style="left:1205px;top:598px;width:1px;height:66px;background:#333;"></div>
<div style="left:1299px;top:463px;width:1px;height:133px;background:#333;"></div>
<div style="left:1299px;top:598px;width:1px;height:66px;background:#333;"></div>
<div style="left:1266px;top:463px;width:1px;height:133px;background:#333;"></div>
<div style="left:1265px;top:598px;width:1px;height:66px;background:#333;"></div>
<div style="left:1267px;top:598px;width:1px;height:66px;background:#333;"></div>
<div style="left:296px;top:614px;width:409px;height:1px;background:#333;"></div>
<div style="left:707px;top:614px;width:69px;height:1px;background:#333;"></div>
<div style="left:846px;top:614px;width:325px;height:1px;background:#333;"></div>
<div style="left:1173px;top:614px;width:186px;height:1px;background:#333;"></div>
<div style="left:296px;top:648px;width:409px;height:1px;background:#333;"></div>
<div style="left:707px;top:648px;width:69px;height:1px;background:#333;"></div>
<div style="left:846px;top:648px;width:325px;height:1px;background:#333;"></div>
<div style="left:1173px;top:648px;width:186px;height:1px;background:#333;"></div>
<div style="left:296px;top:631px;width:409px;height:1px;background:#333;"></div>
<div style="left:707px;top:631px;width:137px;height:1px;background:#333;"></div>
<div style="left:846px;top:631px;width:325px;height:1px;background:#333;"></div>
<div style="left:1173px;top:631px;width:186px;height:1px;background:#333;"></div>
<div style="top:472.99px;font-size:11px;line-height:11px;color:#333;white-space:pre;letter-spacing:0.16px;left:-366.72px;width:800px;text-align:center;transform:scaleX(1.0242);transform-origin:center 0;">Номер</div>
<div style="top:485.79px;font-size:11px;line-height:11px;color:#333;white-space:pre;letter-spacing:0.395px;left:-366.60px;width:800px;text-align:center;transform:scaleX(1.07);transform-origin:center 0;">по</div>
<div style="top:498.59px;font-size:11px;line-height:11px;color:#333;white-space:pre;letter-spacing:0.372px;left:-366.61px;width:800px;text-align:center;transform:scaleX(1.07);transform-origin:center 0;">поряд-</div>
<div style="top:511.39px;font-size:11px;line-height:11px;color:#333;white-space:pre;letter-spacing:0.341px;left:-366.63px;width:800px;text-align:center;transform:scaleX(1.07);transform-origin:center 0;">ку</div>
<div style="top:472.99px;font-size:11px;line-height:11px;color:#333;white-space:pre;letter-spacing:0.381px;left:-274.81px;width:800px;text-align:center;transform:scaleX(1.0684);transform-origin:center 0;">Фамилия, инициалы,</div>
<div style="top:485.79px;font-size:11px;line-height:11px;color:#333;white-space:pre;letter-spacing:0.396px;left:-274.80px;width:800px;text-align:center;transform:scaleX(1.07);transform-origin:center 0;">должность</div>
<div style="top:498.59px;font-size:11px;line-height:11px;color:#333;white-space:pre;letter-spacing:0.364px;left:-274.82px;width:800px;text-align:center;transform:scaleX(1.07);transform-origin:center 0;">(специальность,</div>
<div style="top:511.39px;font-size:11px;line-height:11px;color:#333;white-space:pre;letter-spacing:0.393px;left:-274.80px;width:800px;text-align:center;transform:scaleX(1.07);transform-origin:center 0;">профессия)</div>
<div style="top:485.69px;font-size:11px;line-height:11px;color:#333;white-space:pre;letter-spacing:0.398px;left:-156.30px;width:800px;text-align:center;transform:scaleX(1.0677);transform-origin:center 0;">Табельный</div>
<div style="top:498.49px;font-size:11px;line-height:11px;color:#333;white-space:pre;letter-spacing:0.419px;left:-156.29px;width:800px;text-align:center;transform:scaleX(1.07);transform-origin:center 0;">номер</div>
<div style="top:424.19px;font-size:11px;line-height:11px;color:#333;white-space:pre;letter-spacing:0.397px;left:101.20px;width:800px;text-align:center;transform:scaleX(1.0778);transform-origin:center 0;">Отметки о явках и неявках на работу по числам месяца</div>
<div style="top:467.59px;font-size:11px;line-height:11px;color:#333;white-space:pre;letter-spacing:0.401px;left:-91.70px;width:800px;text-align:center;transform:scaleX(1.07);transform-origin:center 0;">1</div>
<div style="top:534.59px;font-size:11px;line-height:11px;color:#333;white-space:pre;letter-spacing:0.401px;left:-91.70px;width:800px;text-align:center;transform:scaleX(1.07);transform-origin:center 0;">16</div>
<div style="top:467.59px;font-size:11px;line-height:11px;color:#333;white-space:pre;letter-spacing:0.401px;left:-67.70px;width:800px;text-align:center;transform:scaleX(1.07);transform-origin:center 0;">2</div>
<div style="top:534.59px;font-size:11px;line-height:11px;color:#333;white-space:pre;letter-spacing:0.401px;left:-67.70px;width:800px;text-align:center;transform:scaleX(1.07);transform-origin:center 0;">17</div>
<div style="top:467.59px;font-size:11px;line-height:11px;color:#333;white-space:pre;letter-spacing:0.401px;left:-43.70px;width:800px;text-align:center;transform:scaleX(1.07);transform-origin:center 0;">3</div>
<div style="top:534.59px;font-size:11px;line-height:11px;color:#333;white-space:pre;letter-spacing:0.401px;left:-43.70px;width:800px;text-align:center;transform:scaleX(1.07);transform-origin:center 0;">18</div>
<div style="top:467.59px;font-size:11px;line-height:11px;color:#333;white-space:pre;letter-spacing:0.401px;left:-18.70px;width:800px;text-align:center;transform:scaleX(1.07);transform-origin:center 0;">4</div>
<div style="top:534.59px;font-size:11px;line-height:11px;color:#333;white-space:pre;letter-spacing:0.401px;left:-18.70px;width:800px;text-align:center;transform:scaleX(1.07);transform-origin:center 0;">19</div>
<div style="top:467.59px;font-size:11px;line-height:11px;color:#333;white-space:pre;letter-spacing:0.401px;left:7.80px;width:800px;text-align:center;transform:scaleX(1.07);transform-origin:center 0;">5</div>
<div style="top:534.59px;font-size:11px;line-height:11px;color:#333;white-space:pre;letter-spacing:0.401px;left:7.80px;width:800px;text-align:center;transform:scaleX(1.07);transform-origin:center 0;">20</div>
<div style="top:467.59px;font-size:11px;line-height:11px;color:#333;white-space:pre;letter-spacing:0.401px;left:34.30px;width:800px;text-align:center;transform:scaleX(1.07);transform-origin:center 0;">6</div>
<div style="top:534.59px;font-size:11px;line-height:11px;color:#333;white-space:pre;letter-spacing:0.401px;left:34.30px;width:800px;text-align:center;transform:scaleX(1.07);transform-origin:center 0;">21</div>
<div style="top:467.59px;font-size:11px;line-height:11px;color:#333;white-space:pre;letter-spacing:0.401px;left:60.30px;width:800px;text-align:center;transform:scaleX(1.07);transform-origin:center 0;">7</div>
<div style="top:534.59px;font-size:11px;line-height:11px;color:#333;white-space:pre;letter-spacing:0.401px;left:60.30px;width:800px;text-align:center;transform:scaleX(1.07);transform-origin:center 0;">22</div>
<div style="top:467.59px;font-size:11px;line-height:11px;color:#333;white-space:pre;letter-spacing:0.401px;left:86.30px;width:800px;text-align:center;transform:scaleX(1.07);transform-origin:center 0;">8</div>
<div style="top:534.59px;font-size:11px;line-height:11px;color:#333;white-space:pre;letter-spacing:0.401px;left:86.30px;width:800px;text-align:center;transform:scaleX(1.07);transform-origin:center 0;">23</div>
<div style="top:467.59px;font-size:11px;line-height:11px;color:#333;white-space:pre;letter-spacing:0.401px;left:112.80px;width:800px;text-align:center;transform:scaleX(1.07);transform-origin:center 0;">9</div>
<div style="top:534.59px;font-size:11px;line-height:11px;color:#333;white-space:pre;letter-spacing:0.401px;left:112.80px;width:800px;text-align:center;transform:scaleX(1.07);transform-origin:center 0;">24</div>
<div style="top:467.59px;font-size:11px;line-height:11px;color:#333;white-space:pre;letter-spacing:0.401px;left:139.30px;width:800px;text-align:center;transform:scaleX(1.07);transform-origin:center 0;">10</div>
<div style="top:534.59px;font-size:11px;line-height:11px;color:#333;white-space:pre;letter-spacing:0.401px;left:139.30px;width:800px;text-align:center;transform:scaleX(1.07);transform-origin:center 0;">25</div>
<div style="top:467.59px;font-size:11px;line-height:11px;color:#333;white-space:pre;letter-spacing:0.374px;left:165.29px;width:800px;text-align:center;transform:scaleX(1.07);transform-origin:center 0;">11</div>
<div style="top:534.59px;font-size:11px;line-height:11px;color:#333;white-space:pre;letter-spacing:0.401px;left:165.30px;width:800px;text-align:center;transform:scaleX(1.07);transform-origin:center 0;">26</div>
<div style="top:467.59px;font-size:11px;line-height:11px;color:#333;white-space:pre;letter-spacing:0.401px;left:191.30px;width:800px;text-align:center;transform:scaleX(1.07);transform-origin:center 0;">12</div>
<div style="top:534.59px;font-size:11px;line-height:11px;color:#333;white-space:pre;letter-spacing:0.401px;left:191.30px;width:800px;text-align:center;transform:scaleX(1.07);transform-origin:center 0;">27</div>
<div style="top:467.59px;font-size:11px;line-height:11px;color:#333;white-space:pre;letter-spacing:0.401px;left:217.80px;width:800px;text-align:center;transform:scaleX(1.07);transform-origin:center 0;">13</div>
<div style="top:534.59px;font-size:11px;line-height:11px;color:#333;white-space:pre;letter-spacing:0.401px;left:217.80px;width:800px;text-align:center;transform:scaleX(1.07);transform-origin:center 0;">28</div>
<div style="top:467.59px;font-size:11px;line-height:11px;color:#333;white-space:pre;letter-spacing:0.401px;left:244.30px;width:800px;text-align:center;transform:scaleX(1.07);transform-origin:center 0;">14</div>
<div style="top:534.59px;font-size:11px;line-height:11px;color:#333;white-space:pre;letter-spacing:0.401px;left:244.30px;width:800px;text-align:center;transform:scaleX(1.07);transform-origin:center 0;">29</div>
<div style="top:467.59px;font-size:11px;line-height:11px;color:#333;white-space:pre;letter-spacing:0.401px;left:270.30px;width:800px;text-align:center;transform:scaleX(1.07);transform-origin:center 0;">15</div>
<div style="top:534.59px;font-size:11px;line-height:11px;color:#333;white-space:pre;letter-spacing:0.401px;left:270.30px;width:800px;text-align:center;transform:scaleX(1.07);transform-origin:center 0;">30</div>
<div style="top:467.59px;font-size:11px;line-height:11px;color:#333;white-space:pre;letter-spacing:0.48px;left:294.34px;width:800px;text-align:center;transform:scaleX(1.07);transform-origin:center 0;">X</div>
<div style="top:534.59px;font-size:11px;line-height:11px;color:#333;white-space:pre;letter-spacing:0.401px;left:294.30px;width:800px;text-align:center;transform:scaleX(1.07);transform-origin:center 0;">31</div>
<div style="top:424.59px;font-size:11px;line-height:11px;color:#333;white-space:pre;letter-spacing:0.321px;left:376.16px;width:800px;text-align:center;transform:scaleX(1.0586);transform-origin:center 0;">Отработано за</div>
<div style="top:453.99px;font-size:11px;line-height:11px;color:#333;white-space:pre;letter-spacing:0.431px;left:341.72px;width:800px;text-align:center;transform:scaleX(1.0774);transform-origin:center 0;">половину</div>
<div style="top:466.99px;font-size:11px;line-height:11px;color:#333;white-space:pre;letter-spacing:0.41px;left:341.70px;width:800px;text-align:center;transform:scaleX(1.07);transform-origin:center 0;">месяца</div>
<div style="top:479.99px;font-size:11px;line-height:11px;color:#333;white-space:pre;letter-spacing:0.211px;left:341.61px;width:800px;text-align:center;transform:scaleX(1.07);transform-origin:center 0;">(I, II)</div>
<div style="top:466.99px;font-size:11px;line-height:11px;color:#333;white-space:pre;letter-spacing:0.337px;left:411.17px;width:800px;text-align:center;transform:scaleX(1.0567);transform-origin:center 0;">месяц</div>
<div style="top:501.69px;font-size:11px;line-height:11px;color:#333;white-space:pre;letter-spacing:0.406px;left:376.20px;width:800px;text-align:center;transform:scaleX(1.07);transform-origin:center 0;">дни</div>
<div style="top:543.69px;font-size:11px;line-height:11px;color:#333;white-space:pre;letter-spacing:0.413px;left:376.21px;width:800px;text-align:center;transform:scaleX(1.07);transform-origin:center 0;">часы</div>
<div style="top:419.29px;font-size:11px;line-height:11px;color:#333;white-space:pre;letter-spacing:0.34px;left:604.17px;width:800px;text-align:center;transform:scaleX(1.0626);transform-origin:center 0;">Данные для начисления заработной платы по видам</div>
<div style="top:431.69px;font-size:11px;line-height:11px;color:#333;white-space:pre;letter-spacing:0.344px;left:609.17px;width:800px;text-align:center;transform:scaleX(1.0644);transform-origin:center 0;">и направлениям затрат</div>
<div style="top:451.39px;font-size:11px;line-height:11px;color:#333;white-space:pre;letter-spacing:0.454px;left:609.23px;width:800px;text-align:center;transform:scaleX(1.0869);transform-origin:center 0;">код вида оплаты</div>
<div style="top:485.19px;font-size:11px;line-height:11px;color:#333;white-space:pre;letter-spacing:0.445px;left:609.72px;width:800px;text-align:center;transform:scaleX(1.0803);transform-origin:center 0;">корреспондирующий счет</div>
<div style="top:531.19px;font-size:11px;line-height:11px;color:#333;white-space:pre;letter-spacing:0.376px;left:473.19px;width:800px;text-align:center;transform:scaleX(1.07);transform-origin:center 0;">код</div>
<div style="top:543.69px;font-size:11px;line-height:11px;color:#333;white-space:pre;letter-spacing:0.401px;left:473.20px;width:800px;text-align:center;transform:scaleX(1.07);transform-origin:center 0;">вида</div>
<div style="top:556.19px;font-size:11px;line-height:11px;color:#333;white-space:pre;letter-spacing:0.407px;left:473.20px;width:800px;text-align:center;transform:scaleX(1.07);transform-origin:center 0;">оплаты</div>
<div style="top:531.19px;font-size:11px;line-height:11px;color:#333;white-space:pre;letter-spacing:0.376px;left:636.19px;width:800px;text-align:center;transform:scaleX(1.07);transform-origin:center 0;">код</div>
<div style="top:543.69px;font-size:11px;line-height:11px;color:#333;white-space:pre;letter-spacing:0.401px;left:636.20px;width:800px;text-align:center;transform:scaleX(1.07);transform-origin:center 0;">вида</div>
<div style="top:556.19px;font-size:11px;line-height:11px;color:#333;white-space:pre;letter-spacing:0.407px;left:636.20px;width:800px;text-align:center;transform:scaleX(1.07);transform-origin:center 0;">оплаты</div>
<div style="top:517.69px;font-size:11px;line-height:11px;color:#333;white-space:pre;letter-spacing:0.341px;left:532.17px;width:800px;text-align:center;transform:scaleX(1.07);transform-origin:center 0;">кор-</div>
<div style="top:530.39px;font-size:11px;line-height:11px;color:#333;white-space:pre;letter-spacing:0.37px;left:532.18px;width:800px;text-align:center;transform:scaleX(1.07);transform-origin:center 0;">респон-</div>
<div style="top:543.09px;font-size:11px;line-height:11px;color:#333;white-space:pre;letter-spacing:0.392px;left:532.20px;width:800px;text-align:center;transform:scaleX(1.07);transform-origin:center 0;">дирую-</div>
<div style="top:555.79px;font-size:11px;line-height:11px;color:#333;white-space:pre;letter-spacing:0.465px;left:532.23px;width:800px;text-align:center;transform:scaleX(1.07);transform-origin:center 0;">щий</div>
<div style="top:568.49px;font-size:11px;line-height:11px;color:#333;white-space:pre;letter-spacing:0.358px;left:532.18px;width:800px;text-align:center;transform:scaleX(1.07);transform-origin:center 0;">счет</div>
<div style="top:517.69px;font-size:11px;line-height:11px;color:#333;white-space:pre;letter-spacing:0.341px;left:694.67px;width:800px;text-align:center;transform:scaleX(1.07);transform-origin:center 0;">кор-</div>
<div style="top:530.39px;font-size:11px;line-height:11px;color:#333;white-space:pre;letter-spacing:0.37px;left:694.68px;width:800px;text-align:center;transform:scaleX(1.07);transform-origin:center 0;">респон-</div>
<div style="top:543.09px;font-size:11px;line-height:11px;color:#333;white-space:pre;letter-spacing:0.392px;left:694.70px;width:800px;text-align:center;transform:scaleX(1.07);transform-origin:center 0;">дирую-</div>
<div style="top:555.79px;font-size:11px;line-height:11px;color:#333;white-space:pre;letter-spacing:0.465px;left:694.73px;width:800px;text-align:center;transform:scaleX(1.07);transform-origin:center 0;">щий</div>
<div style="top:568.49px;font-size:11px;line-height:11px;color:#333;white-space:pre;letter-spacing:0.358px;left:694.68px;width:800px;text-align:center;transform:scaleX(1.07);transform-origin:center 0;">счет</div>
<div style="top:536.39px;font-size:11px;line-height:11px;color:#333;white-space:pre;letter-spacing:0.406px;left:587.20px;width:800px;text-align:center;transform:scaleX(1.07);transform-origin:center 0;">дни</div>
<div style="top:549.49px;font-size:11px;line-height:11px;color:#333;white-space:pre;letter-spacing:0.355px;left:587.18px;width:800px;text-align:center;transform:scaleX(1.07);transform-origin:center 0;">(часы)</div>
<div style="top:536.39px;font-size:11px;line-height:11px;color:#333;white-space:pre;letter-spacing:0.406px;left:748.70px;width:800px;text-align:center;transform:scaleX(1.07);transform-origin:center 0;">дни</div>
<div style="top:549.49px;font-size:11px;line-height:11px;color:#333;white-space:pre;letter-spacing:0.355px;left:748.68px;width:800px;text-align:center;transform:scaleX(1.07);transform-origin:center 0;">(часы)</div>
<div style="top:434.19px;font-size:11px;line-height:11px;color:#333;white-space:pre;letter-spacing:0.412px;left:866.81px;width:800px;text-align:center;transform:scaleX(1.076);transform-origin:center 0;">Неявки по причинам</div>
<div style="top:517.29px;font-size:11px;line-height:11px;color:#333;white-space:pre;letter-spacing:0.376px;left:789.69px;width:800px;text-align:center;transform:scaleX(1.07);transform-origin:center 0;">код</div>
<div style="top:517.29px;font-size:11px;line-height:11px;color:#333;white-space:pre;letter-spacing:0.376px;left:882.19px;width:800px;text-align:center;transform:scaleX(1.07);transform-origin:center 0;">код</div>
<div style="top:511.69px;font-size:11px;line-height:11px;color:#333;white-space:pre;letter-spacing:0.406px;left:836.20px;width:800px;text-align:center;transform:scaleX(1.07);transform-origin:center 0;">дни</div>
<div style="top:525.29px;font-size:11px;line-height:11px;color:#333;white-space:pre;letter-spacing:0.355px;left:836.18px;width:800px;text-align:center;transform:scaleX(1.07);transform-origin:center 0;">(часы)</div>
<div style="top:511.69px;font-size:11px;line-height:11px;color:#333;white-space:pre;letter-spacing:0.406px;left:930.20px;width:800px;text-align:center;transform:scaleX(1.07);transform-origin:center 0;">дни</div>
<div style="top:525.29px;font-size:11px;line-height:11px;color:#333;white-space:pre;letter-spacing:0.355px;left:930.18px;width:800px;text-align:center;transform:scaleX(1.07);transform-origin:center 0;">(часы)</div>
<div style="top:585.74px;font-size:10px;line-height:10px;color:#333;white-space:pre;letter-spacing:0.315px;left:-364.84px;width:800px;text-align:center;transform:scaleX(1.06);transform-origin:center 0;">1</div>
<div style="top:585.74px;font-size:10px;line-height:10px;color:#333;white-space:pre;letter-spacing:0.315px;left:-274.34px;width:800px;text-align:center;transform:scaleX(1.06);transform-origin:center 0;">2</div>
<div style="top:585.74px;font-size:10px;line-height:10px;color:#333;white-space:pre;letter-spacing:0.315px;left:-155.84px;width:800px;text-align:center;transform:scaleX(1.06);transform-origin:center 0;">3</div>
<div style="top:585.74px;font-size:10px;line-height:10px;color:#333;white-space:pre;letter-spacing:0.315px;left:101.16px;width:800px;text-align:center;transform:scaleX(1.06);transform-origin:center 0;">4</div>
<div style="top:585.74px;font-size:10px;line-height:10px;color:#333;white-space:pre;letter-spacing:0.315px;left:342.16px;width:800px;text-align:center;transform:scaleX(1.06);transform-origin:center 0;">5</div>
<div style="top:585.74px;font-size:10px;line-height:10px;color:#333;white-space:pre;letter-spacing:0.315px;left:411.16px;width:800px;text-align:center;transform:scaleX(1.06);transform-origin:center 0;">6</div>
<div style="top:585.74px;font-size:10px;line-height:10px;color:#333;white-space:pre;letter-spacing:0.315px;left:474.66px;width:800px;text-align:center;transform:scaleX(1.06);transform-origin:center 0;">7</div>
<div style="top:585.74px;font-size:10px;line-height:10px;color:#333;white-space:pre;letter-spacing:0.315px;left:532.16px;width:800px;text-align:center;transform:scaleX(1.06);transform-origin:center 0;">8</div>
<div style="top:585.74px;font-size:10px;line-height:10px;color:#333;white-space:pre;letter-spacing:0.315px;left:587.16px;width:800px;text-align:center;transform:scaleX(1.06);transform-origin:center 0;">9</div>
<div style="top:585.74px;font-size:10px;line-height:10px;color:#333;white-space:pre;letter-spacing:0.315px;left:637.66px;width:800px;text-align:center;transform:scaleX(1.06);transform-origin:center 0;">7</div>
<div style="top:585.74px;font-size:10px;line-height:10px;color:#333;white-space:pre;letter-spacing:0.315px;left:694.66px;width:800px;text-align:center;transform:scaleX(1.06);transform-origin:center 0;">8</div>
<div style="top:585.74px;font-size:10px;line-height:10px;color:#333;white-space:pre;letter-spacing:0.315px;left:748.66px;width:800px;text-align:center;transform:scaleX(1.06);transform-origin:center 0;">9</div>
<div style="top:585.74px;font-size:10px;line-height:10px;color:#333;white-space:pre;letter-spacing:0.315px;left:789.66px;width:800px;text-align:center;transform:scaleX(1.06);transform-origin:center 0;">10</div>
<div style="top:585.74px;font-size:10px;line-height:10px;color:#333;white-space:pre;letter-spacing:0.294px;left:836.15px;width:800px;text-align:center;transform:scaleX(1.06);transform-origin:center 0;">11</div>
<div style="top:585.74px;font-size:10px;line-height:10px;color:#333;white-space:pre;letter-spacing:0.315px;left:883.66px;width:800px;text-align:center;transform:scaleX(1.06);transform-origin:center 0;">12</div>
<div style="top:585.74px;font-size:10px;line-height:10px;color:#333;white-space:pre;letter-spacing:0.315px;left:930.16px;width:800px;text-align:center;transform:scaleX(1.06);transform-origin:center 0;">13</div>
<div style="top:626.42px;font-size:12.5px;line-height:12.5px;color:#333;white-space:pre;letter-spacing:0.331px;left:-364.83px;width:800px;text-align:center;transform:scaleX(1.05);transform-origin:center 0;">1</div>
<div style="top:600.52px;font-size:12.5px;line-height:12.5px;color:#333;white-space:pre;letter-spacing:0.441px;left:-274.78px;width:800px;text-align:center;transform:scaleX(1.0762);transform-origin:center 0;">Ведов М. А.</div>
<div style="top:616.42px;font-size:12.5px;line-height:12.5px;color:#333;white-space:pre;letter-spacing:0.585px;left:-274.01px;width:800px;text-align:center;transform:scaleX(1.0989);transform-origin:center 0;">(Сторож)</div>
<div style="top:626.42px;font-size:12.5px;line-height:12.5px;color:#333;white-space:pre;letter-spacing:0.536px;left:-156.23px;width:800px;text-align:center;transform:scaleX(1.0874);transform-origin:center 0;">0000-00035</div>
<div style="top:601.33px;font-size:10px;line-height:10px;color:#333;white-space:pre;letter-spacing:0.307px;left:-91.75px;width:800px;text-align:center;transform:scaleX(1.06);transform-origin:center 0;">я</div>
<div style="top:601.33px;font-size:10px;line-height:10px;color:#333;white-space:pre;letter-spacing:0.307px;left:-67.75px;width:800px;text-align:center;transform:scaleX(1.06);transform-origin:center 0;">я</div>
<div style="top:601.33px;font-size:10px;line-height:10px;color:#333;white-space:pre;letter-spacing:0.301px;left:-43.75px;width:800px;text-align:center;transform:scaleX(1.06);transform-origin:center 0;">в</div>
<div style="top:601.33px;font-size:10px;line-height:10px;color:#333;white-space:pre;letter-spacing:0.301px;left:-18.75px;width:800px;text-align:center;transform:scaleX(1.06);transform-origin:center 0;">в</div>
<div style="top:601.33px;font-size:10px;line-height:10px;color:#333;white-space:pre;letter-spacing:0.307px;left:7.75px;width:800px;text-align:center;transform:scaleX(1.06);transform-origin:center 0;">я</div>
<div style="top:601.33px;font-size:10px;line-height:10px;color:#333;white-space:pre;letter-spacing:0.307px;left:34.25px;width:800px;text-align:center;transform:scaleX(1.06);transform-origin:center 0;">я</div>
<div style="top:601.33px;font-size:10px;line-height:10px;color:#333;white-space:pre;letter-spacing:0.307px;left:60.25px;width:800px;text-align:center;transform:scaleX(1.06);transform-origin:center 0;">я</div>
<div style="top:601.33px;font-size:10px;line-height:10px;color:#333;white-space:pre;letter-spacing:0.307px;left:86.25px;width:800px;text-align:center;transform:scaleX(1.06);transform-origin:center 0;">я</div>
<div style="top:601.33px;font-size:10px;line-height:10px;color:#333;white-space:pre;letter-spacing:0.307px;left:112.75px;width:800px;text-align:center;transform:scaleX(1.06);transform-origin:center 0;">я</div>
<div style="top:601.33px;font-size:10px;line-height:10px;color:#333;white-space:pre;letter-spacing:0.301px;left:139.25px;width:800px;text-align:center;transform:scaleX(1.06);transform-origin:center 0;">в</div>
<div style="top:601.33px;font-size:10px;line-height:10px;color:#333;white-space:pre;letter-spacing:0.301px;left:165.25px;width:800px;text-align:center;transform:scaleX(1.06);transform-origin:center 0;">в</div>
<div style="top:601.33px;font-size:10px;line-height:10px;color:#333;white-space:pre;letter-spacing:0.307px;left:191.25px;width:800px;text-align:center;transform:scaleX(1.06);transform-origin:center 0;">я</div>
<div style="top:601.33px;font-size:10px;line-height:10px;color:#333;white-space:pre;letter-spacing:0.307px;left:217.75px;width:800px;text-align:center;transform:scaleX(1.06);transform-origin:center 0;">я</div>
<div style="top:601.33px;font-size:10px;line-height:10px;color:#333;white-space:pre;letter-spacing:0.307px;left:244.25px;width:800px;text-align:center;transform:scaleX(1.06);transform-origin:center 0;">я</div>
<div style="top:601.33px;font-size:10px;line-height:10px;color:#333;white-space:pre;letter-spacing:0.307px;left:270.25px;width:800px;text-align:center;transform:scaleX(1.06);transform-origin:center 0;">я</div>
<div style="top:601.24px;font-size:12px;line-height:12px;color:#333;white-space:pre;left:294.10px;width:800px;text-align:center;">X</div>
<div style="top:619.13px;font-size:10px;line-height:10px;color:#333;white-space:pre;left:-91.90px;width:800px;text-align:center;">8</div>
<div style="top:619.13px;font-size:10px;line-height:10px;color:#333;white-space:pre;left:-67.90px;width:800px;text-align:center;">8</div>
<div style="top:619.13px;font-size:10px;line-height:10px;color:#333;white-space:pre;left:7.60px;width:800px;text-align:center;">8</div>
<div style="top:619.13px;font-size:10px;line-height:10px;color:#333;white-space:pre;left:34.10px;width:800px;text-align:center;">8</div>
<div style="top:619.13px;font-size:10px;line-height:10px;color:#333;white-space:pre;left:60.10px;width:800px;text-align:center;">8</div>
<div style="top:619.13px;font-size:10px;line-height:10px;color:#333;white-space:pre;left:86.10px;width:800px;text-align:center;">8</div>
<div style="top:619.13px;font-size:10px;line-height:10px;color:#333;white-space:pre;left:112.60px;width:800px;text-align:center;">8</div>
<div style="top:619.13px;font-size:10px;line-height:10px;color:#333;white-space:pre;left:191.10px;width:800px;text-align:center;">8</div>
<div style="top:619.13px;font-size:10px;line-height:10px;color:#333;white-space:pre;left:217.60px;width:800px;text-align:center;">8</div>
<div style="top:619.13px;font-size:10px;line-height:10px;color:#333;white-space:pre;left:244.10px;width:800px;text-align:center;">8</div>
<div style="top:619.13px;font-size:10px;line-height:10px;color:#333;white-space:pre;left:270.10px;width:800px;text-align:center;">8</div>
<div style="top:618.24px;font-size:12px;line-height:12px;color:#333;white-space:pre;left:294.10px;width:800px;text-align:center;">X</div>
<div style="top:634.93px;font-size:10px;line-height:10px;color:#333;white-space:pre;letter-spacing:0.307px;left:-91.75px;width:800px;text-align:center;transform:scaleX(1.06);transform-origin:center 0;">я</div>
<div style="top:634.93px;font-size:10px;line-height:10px;color:#333;white-space:pre;letter-spacing:0.301px;left:-67.75px;width:800px;text-align:center;transform:scaleX(1.06);transform-origin:center 0;">в</div>
<div style="top:634.93px;font-size:10px;line-height:10px;color:#333;white-space:pre;letter-spacing:0.301px;left:-43.75px;width:800px;text-align:center;transform:scaleX(1.06);transform-origin:center 0;">в</div>
<div style="top:634.93px;font-size:10px;line-height:10px;color:#333;white-space:pre;letter-spacing:0.307px;left:-18.75px;width:800px;text-align:center;transform:scaleX(1.06);transform-origin:center 0;">я</div>
<div style="top:634.93px;font-size:10px;line-height:10px;color:#333;white-space:pre;letter-spacing:0.307px;left:7.75px;width:800px;text-align:center;transform:scaleX(1.06);transform-origin:center 0;">я</div>
<div style="top:634.93px;font-size:10px;line-height:10px;color:#333;white-space:pre;letter-spacing:0.307px;left:34.25px;width:800px;text-align:center;transform:scaleX(1.06);transform-origin:center 0;">я</div>
<div style="top:636.11px;font-size:10.5px;line-height:10.5px;color:#333;white-space:pre;left:60.10px;width:800px;text-align:center;transform:scaleX(0.886);transform-origin:center 0;">ПД</div>
<div style="top:636.11px;font-size:10.5px;line-height:10.5px;color:#333;white-space:pre;left:86.10px;width:800px;text-align:center;transform:scaleX(0.886);transform-origin:center 0;">ПД</div>
<div style="top:634.93px;font-size:10px;line-height:10px;color:#333;white-space:pre;letter-spacing:0.301px;left:112.75px;width:800px;text-align:center;transform:scaleX(1.06);transform-origin:center 0;">в</div>
<div style="top:634.93px;font-size:10px;line-height:10px;color:#333;white-space:pre;letter-spacing:0.301px;left:139.25px;width:800px;text-align:center;transform:scaleX(1.06);transform-origin:center 0;">в</div>
<div style="top:636.11px;font-size:10.5px;line-height:10.5px;color:#333;white-space:pre;left:165.10px;width:800px;text-align:center;transform:scaleX(0.886);transform-origin:center 0;">ПД</div>
<div style="top:636.11px;font-size:10.5px;line-height:10.5px;color:#333;white-space:pre;left:191.10px;width:800px;text-align:center;transform:scaleX(0.886);transform-origin:center 0;">ПД</div>
<div style="top:636.11px;font-size:10.5px;line-height:10.5px;color:#333;white-space:pre;left:217.60px;width:800px;text-align:center;transform:scaleX(0.886);transform-origin:center 0;">ПД</div>
<div style="top:636.11px;font-size:10.5px;line-height:10.5px;color:#333;white-space:pre;left:244.10px;width:800px;text-align:center;transform:scaleX(0.886);transform-origin:center 0;">ПД</div>
<div style="top:636.11px;font-size:10.5px;line-height:10.5px;color:#333;white-space:pre;left:270.10px;width:800px;text-align:center;transform:scaleX(0.886);transform-origin:center 0;">ПД</div>
<div style="top:652.33px;font-size:10px;line-height:10px;color:#333;white-space:pre;left:-91.90px;width:800px;text-align:center;">8</div>
<div style="top:652.33px;font-size:10px;line-height:10px;color:#333;white-space:pre;left:-18.90px;width:800px;text-align:center;">8</div>
<div style="top:652.33px;font-size:10px;line-height:10px;color:#333;white-space:pre;left:7.60px;width:800px;text-align:center;">8</div>
<div style="top:652.33px;font-size:10px;line-height:10px;color:#333;white-space:pre;left:34.10px;width:800px;text-align:center;">8</div>
<div style="top:600.84px;font-size:12px;line-height:12px;color:#333;white-space:pre;letter-spacing:0.353px;left:342.18px;width:800px;text-align:center;transform:scaleX(1.06);transform-origin:center 0;">11</div>
<div style="top:617.44px;font-size:12px;line-height:12px;color:#333;white-space:pre;letter-spacing:0.378px;left:342.19px;width:800px;text-align:center;transform:scaleX(1.06);transform-origin:center 0;">88</div>
<div style="top:634.44px;font-size:12px;line-height:12px;color:#333;white-space:pre;letter-spacing:0.379px;left:342.19px;width:800px;text-align:center;transform:scaleX(1.06);transform-origin:center 0;">4</div>
<div style="top:651.24px;font-size:12px;line-height:12px;color:#333;white-space:pre;letter-spacing:0.378px;left:342.19px;width:800px;text-align:center;transform:scaleX(1.06);transform-origin:center 0;">32</div>
<div style="top:608.54px;font-size:12px;line-height:12px;color:#333;white-space:pre;letter-spacing:0.378px;left:411.69px;width:800px;text-align:center;transform:scaleX(1.06);transform-origin:center 0;">15</div>
<div style="top:642.64px;font-size:12px;line-height:12px;color:#333;white-space:pre;letter-spacing:0.378px;left:411.69px;width:800px;text-align:center;transform:scaleX(1.06);transform-origin:center 0;">120</div>
<div style="top:600.72px;font-size:12.5px;line-height:12.5px;color:#333;white-space:pre;letter-spacing:0.135px;left:1176px;transform:scaleX(1.0157);transform-origin:left 0;">ПД</div>
<div style="top:600.72px;font-size:12.5px;line-height:12.5px;color:#333;white-space:pre;letter-spacing:0.487px;left:1209.7px;transform:scaleX(1.091);transform-origin:left 0;">7(56)</div>
<div style="left:446px;top:631px;width:232px;height:28px;border:3px solid #ef3a3a"></div>
<div style="left:32px;top:673px;width:1311px;height:8px;border-radius:4px;background:#d6d6d6"></div>
<div style="left:32px;top:673px;width:1221px;height:8px;border-radius:4px;background:#9a9a9a"></div>
<svg style="left:18px;top:674px" width="5" height="6" viewBox="0 0 5 6"><path d="M4.2 0.1 V5.9 L0.1 3 Z" fill="#c8c8c8"/></svg>
<svg style="left:1353px;top:674px" width="5" height="6" viewBox="0 0 5 6"><path d="M0.1 0.1 V5.9 L4.2 3 Z" fill="#555"/></svg>
<div style="left:1369px;top:150px;width:8px;height:496px;border-radius:4px;background:#d6d6d6"></div>
<div style="left:1369px;top:150px;width:8px;height:382px;border-radius:4px;background:#9a9a9a"></div>
<svg style="left:1370px;top:136px" width="7" height="5" viewBox="0 0 7 5"><path d="M0.2 3.8 H6 L3.1 0.4 Z" fill="#c8c8c8"/></svg>
<svg style="left:1370px;top:657px" width="7" height="5" viewBox="0 0 7 5"><path d="M0.1 0.2 H6.1 L3.1 3.9 Z" fill="#555"/></svg>
</body></html>
